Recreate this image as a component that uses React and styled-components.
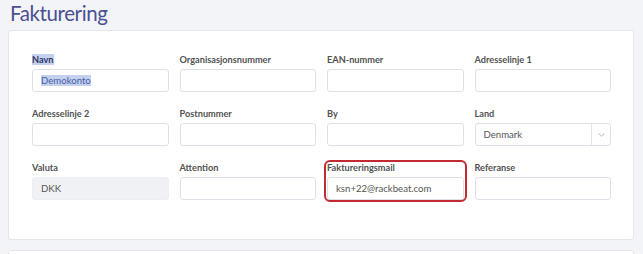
import React from 'react';
import styled, { createGlobalStyle } from 'styled-components';

const GlobalStyle = createGlobalStyle`
    body {
        margin: 0;
        background-color: #f3f4f8;
        font-family: Lato, "Open Sans", sans-serif;
        overflow: hidden;
    }
`;

const Page = styled.div`
    padding: 0 9px 0 8px;
`;

const Title = styled.h1`
    margin: 0 0 4px 2px;
    font-size: 20.5px;
    letter-spacing: -0.4px;
    line-height: 26px;
    font-weight: 400;
    color: #4a5091;
`;

const Card = styled.div`
    background-color: #fff;
    border: 1px solid #e5e7ed;
    border-radius: 3px;
    padding: 22px 22px 39px 23px;
    height: ${(p) => (p.$height ? `${p.$height}px` : 'auto')};
    box-sizing: border-box;
    & + & {
        margin-top: 10px;
    }
`;

const Grid = styled.div`
    display: grid;
    grid-template-columns: repeat(4, 1fr);
    column-gap: 11px;
    row-gap: 15px;
`;

const Field = styled.div`
    position: relative;
    display: flex;
    flex-direction: column;
    gap: 3px;
`;

const Label = styled.div`
    font-size: 9.2px;
    line-height: 13px;
    font-weight: 700;
    color: #525252;
`;

const Box = styled.div`
    height: 23px;
    box-sizing: border-box;
    display: flex;
    align-items: center;
    padding-left: 8px;
    border: 1px solid ${(p) => (p.$disabled ? '#eceef2' : '#dde0e6')};
    border-radius: 3px;
    background-color: ${(p) => (p.$disabled ? '#f0f1f5' : '#fff')};
    font-size: 9.6px;
    color: #555;
`;

const Selected = styled.span`
    background-color: #c3d1ee;
    color: ${(p) => (p.$dark ? '#2f3766' : '#4c5ca8')};
`;

const SelectText = styled.span`
    flex: 1;
`;

const Caret = styled.span`
    width: 18px;
    height: 100%;
    display: flex;
    align-items: center;
    justify-content: center;
    border-left: 1px solid #e3e5ea;
`;

const Marker = styled.div`
    position: absolute;
    top: -1px;
    left: -3px;
    right: -3px;
    bottom: -2px;
    border: 2px solid #c22a33;
    border-radius: 6px;
    pointer-events: none;
`;

const fields = [
    { label: 'Navn', value: 'Demokonto', selected: true },
    { label: 'Organisasjonsnummer' },
    { label: 'EAN-nummer' },
    { label: 'Adresselinje 1' },
    { label: 'Adresselinje 2' },
    { label: 'Postnummer' },
    { label: 'By' },
    { label: 'Land', value: 'Denmark', select: true },
    { label: 'Valuta', value: 'DKK', disabled: true },
    { label: 'Attention' },
    { label: 'Faktureringsmail', value: 'ksn+22@rackbeat.com', marked: true },
    { label: 'Referanse' },
];

const Chevron = () => (
    <svg width="7" height="4" viewBox="0 0 7 4" fill="none">
        <path d="M0.5 0.5 L3.5 3.2 L6.5 0.5" stroke="#a9adb6" strokeWidth="0.9" />
    </svg>
);

const App = () => {
    return (
        <Page>
            <GlobalStyle />
            <Title>Fakturering</Title>
            <Card>
                <Grid>
                    {fields.map((f) => (
                        <Field key={f.label}>
                            <Label>
                                {f.selected ? <Selected $dark>{f.label}</Selected> : f.label}
                            </Label>
                            <Box $disabled={f.disabled}>
                                {f.select ? (
                                    <>
                                        <SelectText>{f.value}</SelectText>
                                        <Caret><Chevron /></Caret>
                                    </>
                                ) : f.selected ? (
                                    <Selected>{f.value}</Selected>
                                ) : (
                                    f.value
                                )}
                            </Box>
                            {f.marked && <Marker />}
                        </Field>
                    ))}
                </Grid>
            </Card>
            <Card $height={40} />
        </Page>
    );
};

export default App;
